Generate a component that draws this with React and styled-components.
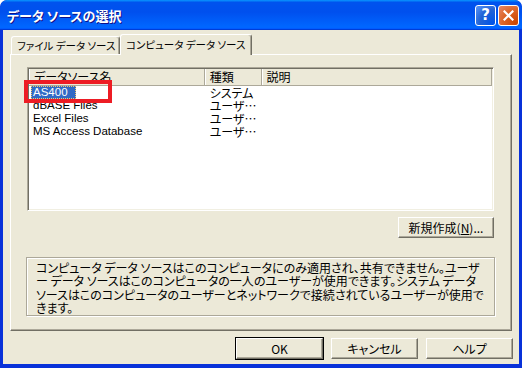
import React from 'react';
import styled, { createGlobalStyle } from 'styled-components';

const Global = createGlobalStyle`
    html, body { margin: 0; padding: 0; background: #fff; }
    body {
        font-family: "Liberation Sans", "Noto Sans CJK JP", sans-serif;
        font-size: 11px;
        color: #000;
    }
`

const jp = `
    font-family: "Noto Sans CJK JP", sans-serif;
    font-size: 12px;
    font-feature-settings: "palt";
`

const Window = styled.div`
    width: 522px;
    height: 368px;
    box-sizing: border-box;
    display: flex;
    flex-direction: column;
    background: #0831d9;
    border-radius: 7px 7px 0 0;
    padding: 0 3px 4px 3px;
    overflow: hidden;
`

const TitleBar = styled.div`
    height: 30px;
    margin: 0 -3px;
    display: flex;
    align-items: center;
    padding: 0 3px 0 7px;
    background: linear-gradient(to bottom, #0997ff 0%, #0053ee 8%, #0050ee 40%, #0066ff 88%, #0066ff 93%, #005bff 95%, #003dd7 96%, #003dd7 100%);
    border-radius: 7px 7px 0 0;
`

const Title = styled.div`
    flex: 1;
    color: #fff;
    ${jp}
    font-size: 13px;
    font-weight: bold;
    line-height: 15px;
    text-shadow: 1px 1px #0f1089;
`

const Controls = styled.div`
    display: flex;
    gap: 2px;
`

const CtrlButton = styled.div`
    width: 21px;
    height: 21px;
    box-sizing: border-box;
    border: 1px solid #fff;
    border-radius: 3px;
    display: flex;
    align-items: center;
    justify-content: center;
    color: #fff;
    font-family: "DejaVu Sans", sans-serif;
    font-weight: bold;
    font-size: 15px;
    background: ${p => p.$close
        ? 'radial-gradient(circle at 90% 90%, #cc4600 0%, #dc6527 55%, #e5805a 90%)'
        : 'radial-gradient(circle at 90% 90%, #0054e9 0%, #2263d5 55%, #4e8bf3 90%)'};
`

const Body = styled.div`
    flex: 1;
    display: flex;
    flex-direction: column;
    background: #ece9d8;
    padding: 4px 7px 5px 7px;
`

const TabRow = styled.div`
    height: 20px;
    display: flex;
    align-items: flex-end;
    padding-left: 1px;
`

const Tab = styled.div`
    position: relative;
    flex: none;
    width: ${p => p.$w}px;
    height: ${p => (p.$active ? 21 : 18)}px;
    box-sizing: border-box;
    margin-bottom: ${p => (p.$active ? -1 : 0)}px;
    background: #ece9d8;
    border-top: 1px solid #fff;
    border-left: 1px solid #fff;
    border-right: 1px solid #716f64;
    box-shadow: inset -1px 0 #aca899;
    border-radius: 3px 3px 0 0;
    z-index: ${p => (p.$active ? 2 : 1)};
    ${jp}
    font-size: 10.5px;
    line-height: 15px;
    padding: ${p => (p.$active ? 2 : 1)}px 0 0 5px;
    white-space: nowrap;
`

const Panel = styled.div`
    flex: 1;
    box-sizing: border-box;
    border-top: 1px solid #fff;
    border-left: 1px solid #fff;
    border-right: 1px solid #716f64;
    border-bottom: 1px solid #716f64;
    box-shadow: inset -1px -1px #aca899;
    padding: 12px 17px 0 16px;
    display: flex;
    flex-direction: column;
`

const ListView = styled.div`
    position: relative;
    height: 144px;
    box-sizing: border-box;
    background: #fff;
    border-top: 1px solid #aca899;
    border-left: 1px solid #aca899;
    border-right: 1px solid #fff;
    border-bottom: 1px solid #fff;
    box-shadow: inset 1px 1px #716f64, inset -1px -1px #f1efe2;
    padding: 1px;
`

const HeaderRow = styled.div`
    display: flex;
    height: 16px;
    background: #ece9d8;
    border-bottom: 1px solid #aca899;
`

const HeaderCell = styled.div`
    width: ${p => p.$w}px;
    box-sizing: border-box;
    border-right: 1px solid #aca899;
    box-shadow: inset 1px 0 #fff;
    ${jp}
    line-height: 16px;
    padding-left: 5px;
`

const Row = styled.div`
    display: flex;
    height: 13px;
    line-height: 13px;
    white-space: nowrap;
`

const Cell = styled.div`
    width: ${p => p.$w}px;
    padding-left: ${p => p.$pad}px;
    box-sizing: border-box;
    ${p => p.$jp && jp}
    font-size: ${p => (p.$jp ? 12 : 11.5)}px;
`

const Selected = styled.span`
    display: inline-block;
    background: #316ac5;
    color: #fff;
    padding: 0 8px 0 2px;
    margin-left: -2px;
    outline: 1px dotted #f4c86c;
    outline-offset: -1px;
    line-height: 13px;
`

const Mark = styled.div`
    position: absolute;
    left: -4px;
    top: 12px;
    width: 88px;
    height: 23px;
    box-sizing: border-box;
    border: 4px solid #ed1c24;
`

const ButtonBar = styled.div`
    display: flex;
    justify-content: flex-end;
    gap: 8px;
    margin-top: ${p => p.$top || 0}px;
    margin-right: ${p => p.$right || 0}px;
`

const Button = styled.div`
    width: ${p => p.$w}px;
    height: 21px;
    box-sizing: border-box;
    display: flex;
    align-items: center;
    justify-content: center;
    background: #ece9d8;
    border-top: 1px solid #fff;
    border-left: 1px solid #fff;
    border-right: 1px solid #716f64;
    border-bottom: 1px solid #716f64;
    box-shadow: inset -1px -1px #aca899${p => (p.$default ? ', 0 0 0 1px #000' : '')};
    ${jp}
    line-height: 13px;
    ${p => p.$default && 'margin-left: 1px;'}
`

const Underline = styled.span`
    text-decoration: underline;
`

const InfoBox = styled.div`
    margin: 19px -1px 0 -1px;
    height: 59px;
    box-sizing: border-box;
    border: 1px solid #aca899;
    box-shadow: inset 1px 1px #fff, 1px 1px #fff;
    padding: 3px 8px 0 9px;
    ${jp}
    line-height: 13.3px;
`

const Line = styled.div`
    white-space: nowrap;
`

const cols = [176, 57, 231]

const rows = [
    { name: 'AS400', type: 'システム', selected: true },
    { name: 'dBASE Files', type: 'ユーザ…' },
    { name: 'Excel Files', type: 'ユーザ…' },
    { name: 'MS Access Database', type: 'ユーザ…' },
]

const info = [
    'コンピュータ データ ソースはこのコンピュータにのみ適用され、共有できません。ユーザ',
    'ー データ ソースはこのコンピュータの一人のユーザーが使用できます。システム データ',
    'ソースはこのコンピュータのユーザーとネットワークで接続されているユーザーが使用で',
    'きます。',
]

const App = () => {
    return (
        <>
            <Global />
            <Window>
                <TitleBar>
                    <Title>データ ソースの選択</Title>
                    <Controls>
                        <CtrlButton>?</CtrlButton>
                        <CtrlButton $close>
                            <svg width="11" height="11" viewBox="0 0 11 11">
                                <path d="M1.5 1.5 L9.5 9.5 M9.5 1.5 L1.5 9.5" stroke="#fff" strokeWidth="2.2" strokeLinecap="square" />
                            </svg>
                        </CtrlButton>
                    </Controls>
                </TitleBar>
                <Body>
                    <TabRow>
                        <Tab $w={109}>ファイル データ ソース</Tab>
                        <Tab $w={132} $active>コンピュータ データ ソース</Tab>
                    </TabRow>
                    <Panel>
                        <ListView>
                            <HeaderRow>
                                <HeaderCell $w={cols[0]}>データソース名</HeaderCell>
                                <HeaderCell $w={cols[1]}>種類</HeaderCell>
                                <HeaderCell $w={cols[2]}>説明</HeaderCell>
                            </HeaderRow>
                            {rows.map(r => (
                                <Row key={r.name}>
                                    <Cell $w={cols[0]} $pad={4}>
                                        {r.selected ? <Selected>{r.name}</Selected> : r.name}
                                    </Cell>
                                    <Cell $w={cols[1]} $pad={5} $jp>{r.type}</Cell>
                                    <Cell $w={cols[2]} $pad={5}></Cell>
                                </Row>
                            ))}
                            <Mark />
                        </ListView>
                        <ButtonBar $top={6}>
                            <Button $w={96}>新規作成(<Underline>N</Underline>)...</Button>
                        </ButtonBar>
                        <InfoBox>
                            {info.map((l, i) => <Line key={i}>{l}</Line>)}
                        </InfoBox>
                    </Panel>
                    <ButtonBar $top={7} $right={-1}>
                        <Button $w={87} $default>OK</Button>
                        <Button $w={87}>キャンセル</Button>
                        <Button $w={87}>ヘルプ</Button>
                    </ButtonBar>
                </Body>
            </Window>
        </>
    )
}

export default App
